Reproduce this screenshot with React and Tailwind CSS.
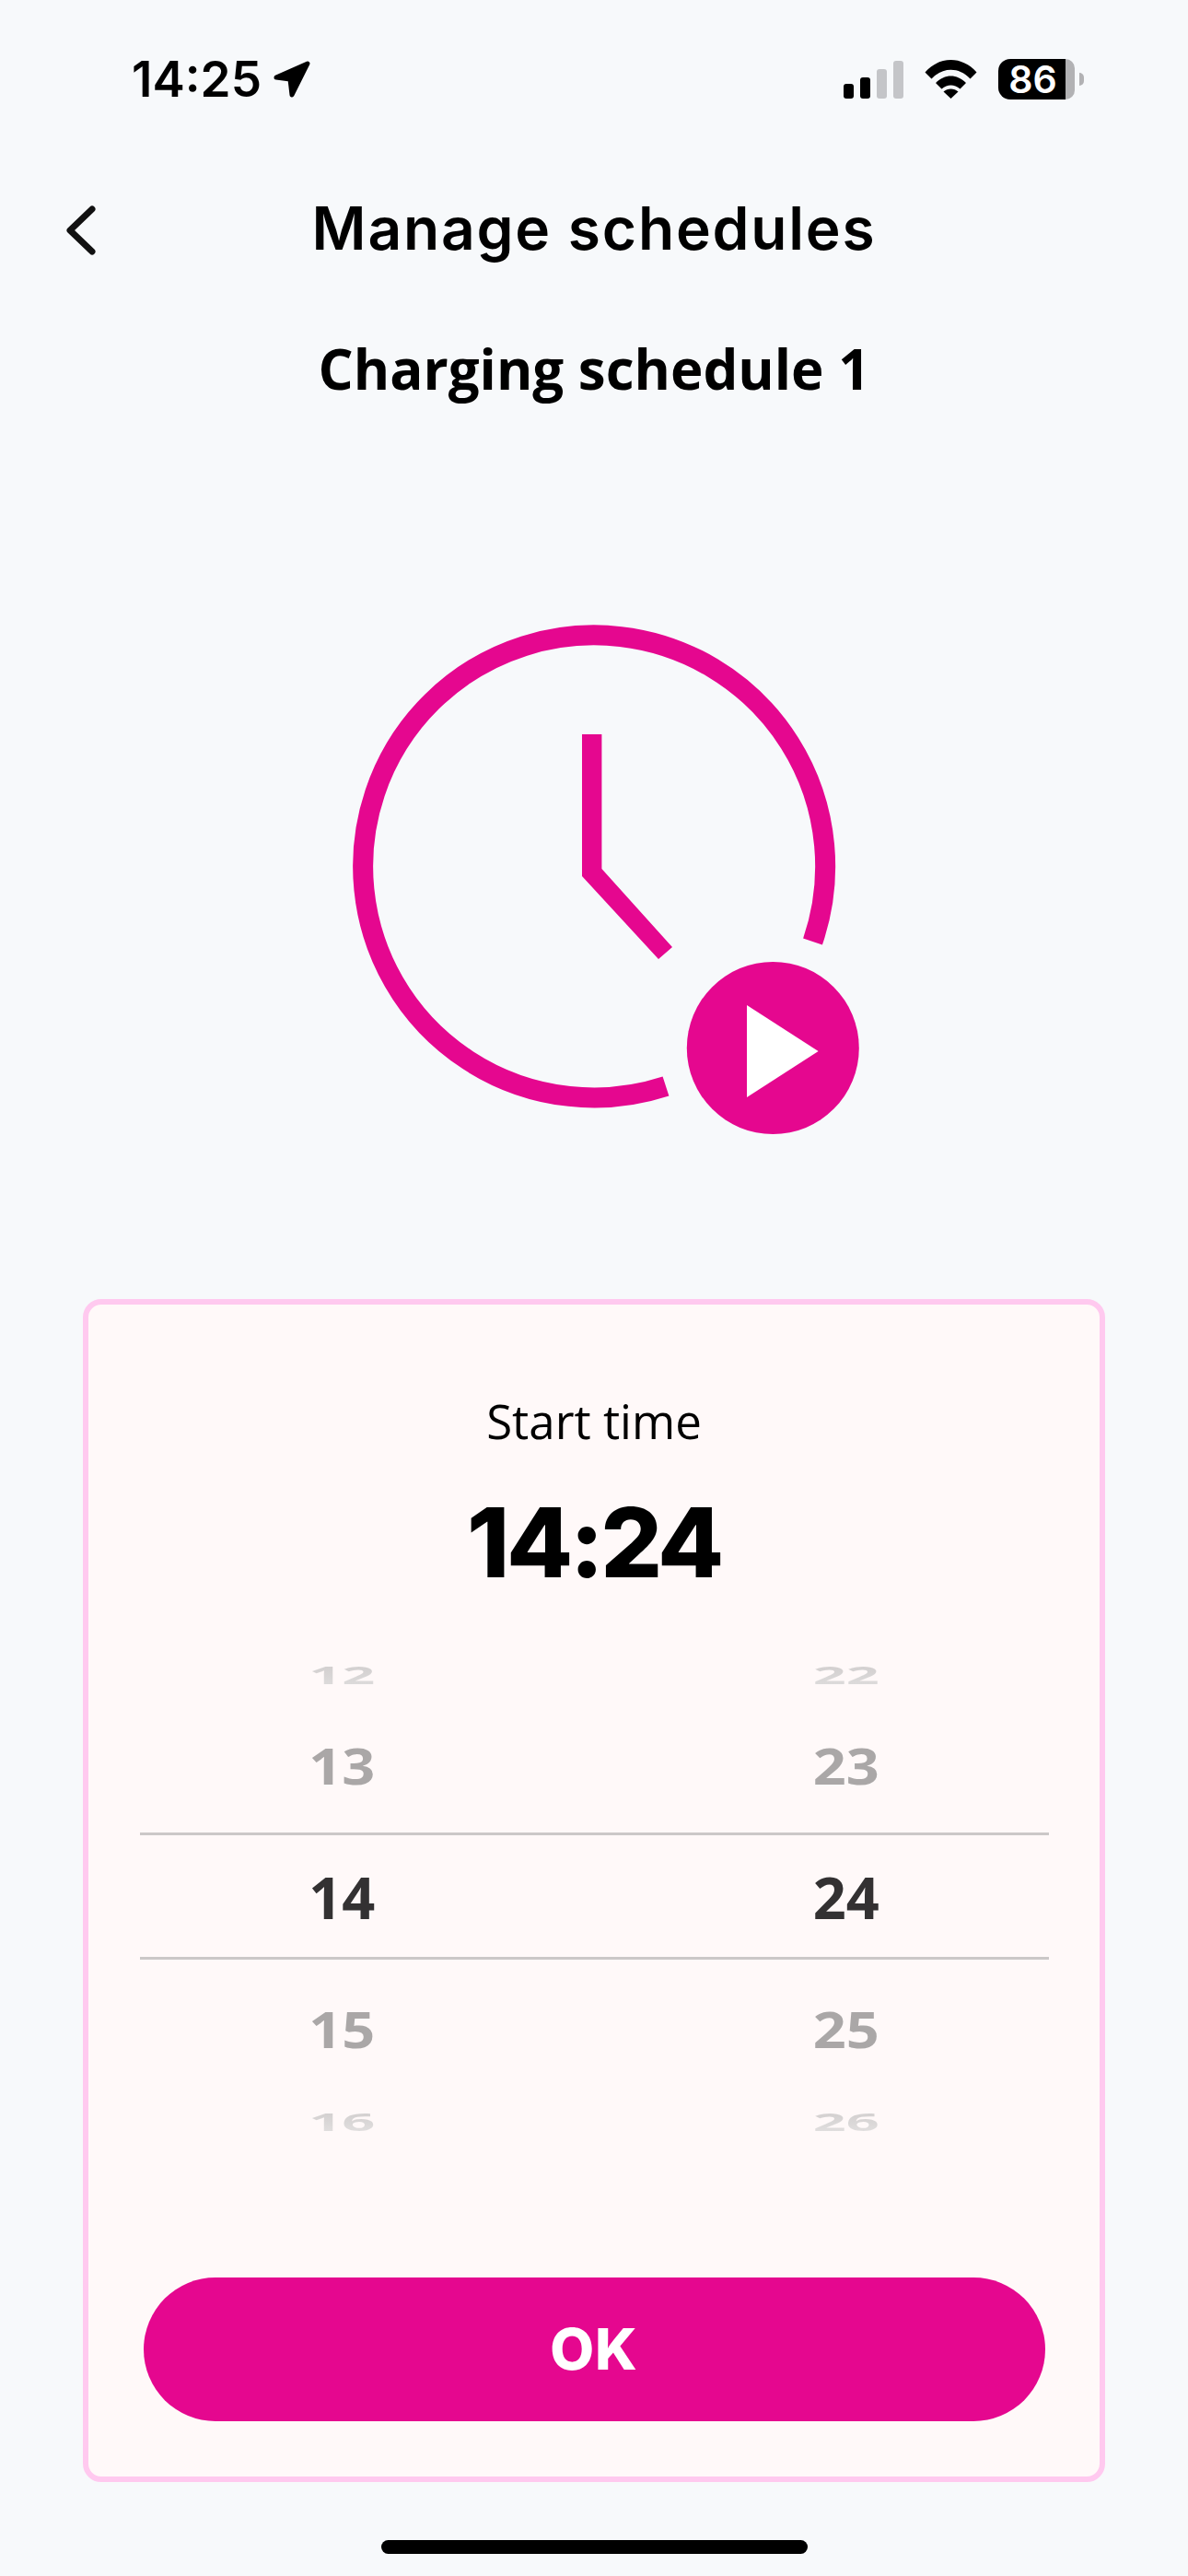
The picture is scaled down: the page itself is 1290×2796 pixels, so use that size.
export default function App() {
  const Row = ({ a, b, h, cls }) => (
    <div className={`grid grid-cols-2 gap-x-[108px] items-center text-center font-['Open_Sans',sans-serif] font-bold text-[63px] leading-none ${h}`}>
      <div><span className={`inline-block ${cls}`}>{a}</span></div>
      <div><span className={`inline-block ${cls}`}>{b}</span></div>
    </div>
  );
  return (
    <div className="w-[1290px] h-[2796px] bg-[#f7f9fb] flex flex-col overflow-hidden text-black">
      {/* status bar */}
      <div className="mt-[64px] h-[44px] flex items-center justify-between pl-[143px] pr-[113px]">
        <div className="flex items-center gap-[12px]">
          <span className="font-['Inter',sans-serif] font-semibold text-[53px] leading-none">14:25</span>
          <svg width="42" height="44" viewBox="0 0 42 44" className="block">
            <polygon points="4,20 38,5 21,39 19,22" fill="#000" stroke="#000" strokeWidth="5" strokeLinejoin="round" />
          </svg>
        </div>
        <div className="flex items-center">
          <div className="flex items-end gap-[7px] h-[41px] self-end mb-[1px]">
            <div className="w-[11px] h-[16px] rounded-[3px] bg-black" />
            <div className="w-[11px] h-[23px] rounded-[3px] bg-black" />
            <div className="w-[11px] h-[32px] rounded-[3px] bg-[#c4c5c8]" />
            <div className="w-[11px] h-[41px] rounded-[3px] bg-[#c4c5c8]" />
          </div>
          <svg width="57" height="42" viewBox="0 0 57 42" className="block ml-[23px]">
            <path d="M0.5 13.5C16 -4.5 41 -4.5 56.5 13.5L49.5 20.5C37.5 7.5 19.5 7.5 7.5 20.5Z" fill="#000" />
            <path d="M12 25C22 15 35 15 45 25L38.5 31.5C32 26 25 26 18.5 31.5Z" fill="#000" />
            <path d="M20.5 34.5C25 30.5 32 30.5 36.5 34.5L28.5 42Z" fill="#000" />
          </svg>
          <div className="ml-[23px] flex items-center">
            <div className="w-[83px] h-[44px] flex">
              <div className="w-[73px] rounded-l-[13px] bg-black text-white font-['Inter',sans-serif] font-semibold text-[41px] leading-none flex items-center justify-center pl-[2px]">86</div>
              <div className="w-[10px] rounded-r-[13px] bg-[#b2b2b4]" />
            </div>
            <div className="ml-[5px] w-[5px] h-[14px] rounded-r-full bg-[#b2b2b4]" />
          </div>
        </div>
      </div>

      {/* header */}
      <div className="mt-[107px] h-[70px] grid grid-cols-[1fr_auto_1fr] items-center">
        <svg width="36" height="54" viewBox="0 0 36 54" className="block ml-[70px]">
          <path d="M30 4L6 27L30 50" fill="none" stroke="#111" strokeWidth="7" strokeLinecap="round" strokeLinejoin="round" />
        </svg>
        <h1 className="pb-[5px] font-['Inter',sans-serif] font-semibold text-[64px] leading-none tracking-[1.8px]">Manage schedules</h1>
        <div />
      </div>
      <h2 className="mt-[80px] h-[70px] flex items-center justify-center font-['Open_Sans',sans-serif] font-bold text-[60px] leading-none">Charging schedule 1</h2>

      {/* illustration */}
      <svg width="600" height="565" viewBox="345 670 600 565" className="block mx-auto mt-[235px]">
        <path d="M723 1179A251 251 0 1 1 882.5 1022" fill="none" stroke="#e5078f" strokeWidth="22" />
        <polygon points="632,797 653.4,797 653.4,943 730,1028 715,1041 632,951" fill="#e5078f" />
        <circle cx="839.3" cy="1137.5" r="93.5" fill="#e5078f" />
        <polygon points="811,1091 888.6,1141 811,1191" fill="#fff" />
      </svg>

      {/* card */}
      <div className="mt-[175px] ml-[90px] w-[1110px] h-[1284px] rounded-[20px] border-[6px] border-[#ffc9ef] bg-[#fff9f9] flex flex-col items-center">
        <div className="mt-[96px] h-[60px] flex items-center font-['Open_Sans',sans-serif] text-[51px] leading-none">Start time</div>
        <div className="mt-[46px] h-[110px] flex items-center font-['Inter',sans-serif] font-extrabold text-[105px] leading-none tracking-[-3.5px]">14:24</div>
        <div className="mt-[58px] w-[987px] flex flex-col">
          <Row a="12" b="22" h="h-[57px]" cls="scale-y-[0.42] bg-linear-to-b from-[#d0cdcd] to-[#dedcdc] bg-clip-text text-transparent" />
          <Row a="13" b="23" h="h-[146px]" cls="scale-y-[0.85] text-[#aaa7a7]" />
          <div className="h-[138px] border-y-[3px] border-[#cbc8c8]">
            <Row a="14" b="24" h="h-full" cls="text-[#333132]" />
          </div>
          <Row a="15" b="25" h="h-[146px] pt-[4px]" cls="scale-y-[0.85] text-[#aaa7a7]" />
          <Row a="16" b="26" h="h-[2px] -mt-[2px]" cls="scale-y-[0.42] bg-linear-to-b from-[#d0cdcd] to-[#e2e0e0] bg-clip-text text-transparent" />
        </div>
        <button className="mt-[199px] w-[979px] h-[156px] rounded-full bg-[#e5078f] text-white font-['Inter',sans-serif] font-extrabold text-[62px] leading-none tracking-[1px]">OK</button>
      </div>

      {/* home indicator */}
      <div className="mt-[63px] mx-auto w-[463px] h-[15px] rounded-full bg-black" />
    </div>
  );
}
